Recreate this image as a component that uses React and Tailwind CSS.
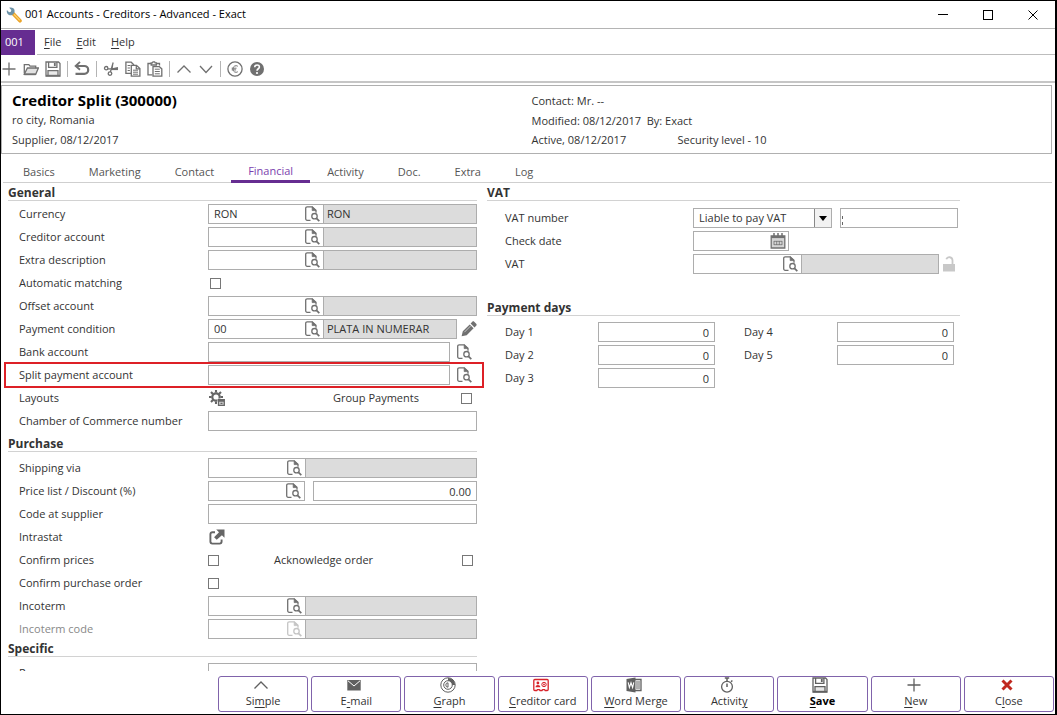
import { useState } from "react";
import clsx from "clsx";

const ICON = "h-4 w-4 shrink-0";

function Svg({ children, className = ICON }) {
  return (
    <svg
      viewBox="0 0 16 16"
      className={className}
      fill="none"
      stroke="currentColor"
      strokeWidth="1.3"
      aria-hidden="true"
    >
      {children}
    </svg>
  );
}

const WrenchIcon = () => (
  <svg viewBox="0 0 16 16" className={ICON} fill="none" aria-hidden="true">
    <path d="M7 6.500l7 7.300" stroke="#eba42a" strokeWidth="3.600" strokeLinecap="round" />
    <path d="M8 7.300l5.800 6" stroke="#ffd676" strokeWidth="1.200" />
    <path
      d="M3.200 .7l2.100 2.200-.4 1.800-1.800.5L.9 3C.2 5.300 1.500 7.600 3.600 8.200c1.100.3 2.100.1 2.700-.3l2-2.100C8.900 4 8.600 2.300 7.300 1.300 6.200.4 4.500.2 3.200.7z"
      fill="#6d93a8"
    />
  </svg>
);

const PlusIcon = () => (
  <Svg>
    <path d="M8 1.500v13M1.500 8h13" />
  </Svg>
);

const OpenIcon = () => (
  <Svg>
    <path d="M1.300 12.500V3.600h4.500l1.300 1.600h5.600v2" />
    <path d="M1.300 13.300L4.400 7h11l-2.700 6.300z" fill="currentColor" fillOpacity=".2" />
    <path d="M1.300 13.300h11.400" strokeWidth="1.800" />
  </Svg>
);

const SaveIcon = () => (
  <Svg>
    <path d="M1 1h12.500L15 2.500V15H1z" />
    <path d="M3.600 1v5.300h8.300V1" />
    <path d="M9.800 2v3" strokeWidth="1.800" />
    <path d="M3 15V9.600h10V15" fill="currentColor" fillOpacity=".15" />
    <path d="M1 14.600h14" strokeWidth="1.600" />
  </Svg>
);

const UndoIcon = () => (
  <Svg>
    <path d="M2 5h8.300a3.900 3.900 0 0 1 0 7.800H1.500" strokeWidth="2.200" />
    <path d="M6 .8L1.600 5 6 8.800" strokeWidth="1.800" />
  </Svg>
);

const CutIcon = () => (
  <Svg>
    <circle cx="3.200" cy="7.200" r="1.700" />
    <circle cx="7" cy="12.600" r="1.800" />
    <path d="M4.800 7.900l10 .2M15 6.600L8.200 8.200M7.400 10.900L10.200 1.500M9.800 2.500l-.8 5.500" />
    <path d="M8 8.100h7" strokeWidth="2" />
  </Svg>
);

const CopyIcon = () => (
  <Svg>
    <path d="M6 12.300H.9V1.200h5.300L9 4" />
    <path d="M6.300 4.400h5.200l3.400 3.200v7.500H6.300z" />
    <path d="M11.300 4.400v3.400h3.600" />
    <path d="M2.600 4.500h2.800M2.600 7h2.300M2.600 9.500h2.300M8 9.200h5M8 11.200h5M8 13.200h5" strokeWidth="1" />
  </Svg>
);

const PasteIcon = () => (
  <Svg>
    <path d="M5.300 13.800H1V2.500h3M9.500 2.500h3v2" />
    <path d="M4.200 4V1.800h1.300L6 .8h1.600l.5 1h1.300V4z" />
    <path d="M6 5.600h6.300l2.500 2.300v7.300H6z" />
    <path d="M7.800 8.200h5M7.800 10.500h5M7.800 12.800h5" strokeWidth="1" />
  </Svg>
);

const UpIcon = () => (
  <Svg>
    <path d="M1.500 11.500L8 5l6.500 6.500" />
  </Svg>
);

const DownIcon = () => (
  <Svg>
    <path d="M2 5l6 6.500L14 5" />
  </Svg>
);

const EuroIcon = () => (
  <Svg>
    <circle cx="8" cy="8" r="7.100" />
    <path d="M10.800 5.200A3.200 3.200 0 0 0 5.900 8a3.200 3.200 0 0 0 4.900 2.800M4.700 7.200h4.800M4.700 8.900h4.400" strokeWidth="1" />
  </Svg>
);

const HelpIcon = () => (
  <Svg>
    <circle cx="8" cy="8" r="7" fill="currentColor" stroke="none" />
    <path d="M5.700 6.200c0-3 4.700-3 4.700-.1C10.400 7.800 8 7.700 8 9.700" stroke="white" strokeWidth="1.600" />
    <circle cx="8" cy="12" r="1.100" fill="white" stroke="none" />
  </Svg>
);

const LookupIcon = () => (
  <Svg>
    <path d="M6.500 14.300H3.200c-.9 0-1.500-.6-1.500-1.500V2.300c0-.9.600-1.500 1.500-1.500h5L12 4.400v2.300" />
    <path d="M8.200.8l3.800 3.800H8.200z" fill="currentColor" strokeWidth=".8" />
    <circle cx="10.500" cy="10.200" r="2.700" />
    <path d="M12.500 12.300l2.800 2.900" strokeWidth="1.700" />
  </Svg>
);

const PencilIcon = () => (
  <Svg>
    <path
      d="M.6 15.300l1.200-5L8.700 3.400l3.900 3.900-6.900 6.900zM9.600 2.500l1.700-1.700c.6-.6 1.300-.6 1.900 0l2 2c.6.6.6 1.300 0 1.900l-1.700 1.700z"
      fill="currentColor"
      stroke="none"
    />
    <path d="M3.400 11.200l6.300-6.300" stroke="white" strokeWidth=".6" />
  </Svg>
);

const GearIcon = () => (
  <Svg>
    <circle cx="7" cy="7" r="3.700" strokeWidth="2.200" />
    <path
      d="M7 0v2.600M7 11.500V14M0 7h2.600M11.500 7H14M2 2l1.900 1.900M10 4l2-2M2 12l1.900-1.900"
      strokeWidth="2.100"
    />
    <path d="M8.500 8.500h7v7h-7z" fill="white" stroke="none" />
    <path d="M9.500 9.600h5.800v5.800H9.500zM9.500 11h5.800M11.500 13.300h2" fill="currentColor" fillOpacity=".3" />
  </Svg>
);

const PopOutIcon = () => (
  <Svg>
    <path d="M6 3.300H3.400c-1.200 0-2 .7-2 1.900v7.400c0 1.200.8 2 2 2h7.200c1.200 0 2-.8 2-2v-2" strokeWidth="1.900" />
    <path d="M7.200.6h8.300v8.200l-2.600-2.600-5.200 4.600-2.600-2.600 4.900-4.900z" fill="currentColor" stroke="none" />
  </Svg>
);

const CalendarIcon = () => (
  <Svg>
    <path d="M1.200 3h13.600v12H1.200z" fill="#d4d4d4" />
    <path d="M1.200 4h13.600" strokeWidth="2.200" />
    <path d="M4 0v3M8 0v3M12 0v3" strokeWidth="1.500" />
    <path d="M4 8.300h8M4 11.700h8M4 8v4M6.700 8v4M9.300 8v4M12 8v4" strokeWidth=".8" />
  </Svg>
);

const UnlockIcon = () => (
  <Svg>
    <path d="M2 8h12v7.500H2z" fill="currentColor" stroke="none" />
    <path d="M11.500 8V4.300a3.200 3.200 0 0 0-6.200-1" strokeWidth="1.800" />
  </Svg>
);

const MailIcon = () => (
  <Svg>
    <path d="M1.300 3h13.400v10.500H1.300z" fill="currentColor" stroke="none" />
    <path d="M2 3.800L8 9l6-5.200" stroke="white" strokeWidth="1" />
  </Svg>
);

const GraphIcon = () => (
  <Svg>
    <circle cx="8" cy="8" r="7.200" strokeWidth="1" />
    <circle cx="8" cy="8" r="4.300" strokeWidth="1" />
    <path d="M8 5.800v4.400a2.200 2.200 0 1 1 0-4.400" strokeWidth="1" />
    <path d="M8 .9A7.100 7.100 0 0 1 15.100 8h-2.800A4.300 4.300 0 0 0 8 3.700z" fill="currentColor" stroke="none" />
  </Svg>
);

const CardIcon = () => (
  <Svg>
    <path d="M.8 3.500c0-.6.400-1 1-1h12.400c.6 0 1 .4 1 1v9c0 .6-.4 1-1 1h-2l-.7-.9h-1.800l-.7.9H7l-.7-.9H4.500l-.7.900h-2c-.6 0-1-.4-1-1z" />
    <circle cx="4.900" cy="6" r="1.400" fill="currentColor" stroke="none" />
    <path d="M2.500 10.300c0-3 4.800-3 4.800 0z" fill="currentColor" stroke="none" />
    <circle cx="11" cy="7.500" r="2.200" strokeWidth="1" />
    <circle cx="11" cy="7.500" r=".9" fill="currentColor" stroke="none" />
  </Svg>
);

const WordIcon = () => (
  <Svg>
    <path d="M9 2.500h6v11H9" />
    <path d="M10 5h4M10 7h4M10 9h4M10 11h4" strokeWidth="1" />
    <path d="M.5 2L9.500.5v15L.5 14z" fill="currentColor" stroke="none" />
    <path d="M2.200 5.300l1.200 5.200L5 5.800l1.600 4.700 1.200-5.200" stroke="white" strokeWidth="1.100" />
  </Svg>
);

const StopwatchIcon = () => (
  <Svg>
    <circle cx="8" cy="9.700" r="5.400" />
    <path d="M5.800.9h4.400M8 1v3M8 6.500v3.500M12 4.800l1.400-1.300" strokeWidth="1.500" />
  </Svg>
);

const CrossIcon = () => (
  <Svg>
    <path d="M3.500 3.500l9 9M12.500 3.500l-9 9" strokeWidth="3" />
  </Svg>
);

const MENUS = ["File", "Edit", "Help"];

const TOOLBAR = [
  [
    ["New", PlusIcon],
    ["Open", OpenIcon],
    ["Save", SaveIcon],
  ],
  [["Undo", UndoIcon]],
  [
    ["Cut", CutIcon],
    ["Copy", CopyIcon],
    ["Paste", PasteIcon],
  ],
  [
    ["Previous", UpIcon],
    ["Next", DownIcon],
  ],
  [
    ["Currency", EuroIcon],
    ["Help", HelpIcon],
  ],
];

const TABS = ["Basics", "Marketing", "Contact", "Financial", "Activity", "Doc.", "Extra", "Log"];

const ACTIONS = [
  { label: "Simple", key: 2, icon: UpIcon },
  { label: "E-mail", key: 1, icon: MailIcon },
  { label: "Graph", key: 0, icon: GraphIcon },
  { label: "Creditor card", key: 0, icon: CardIcon, color: "text-[#d8232a]" },
  { label: "Word Merge", key: 0, icon: WordIcon },
  { label: "Activity", key: 7, icon: StopwatchIcon },
  { label: "Save", key: 0, icon: SaveIcon, bold: true },
  { label: "New", key: 0, icon: PlusIcon },
  { label: "Close", key: 1, icon: CrossIcon, color: "text-[#c0281f]" },
];

function AccessLabel({ text, at = 0 }) {
  return (
    <span>
      {text.slice(0, at)}
      <u className="underline-offset-2">{text[at]}</u>
      {text.slice(at + 1)}
    </span>
  );
}

function Section({ title, children, className }) {
  return (
    <section className={className}>
      <h2 className="h-[18px] border-b border-[#d2d2d2] text-[12px] leading-5 font-bold text-[#333]">
        {title}
      </h2>
      {children}
    </section>
  );
}

function Row({ id, label, wide, muted, highlight, children }) {
  return (
    <div className={clsx("relative flex h-5 items-center", wide ? "pl-[18px]" : "pl-[11px]")}>
      <label
        htmlFor={id}
        className={clsx("shrink-0", wide ? "w-[188px]" : "w-[189px]", muted && "text-[#888]")}
      >
        {label}
      </label>
      <div className="flex min-w-0 flex-1 items-center">{children}</div>
      {highlight ? (
        <span className="pointer-events-none absolute -top-[3px] -right-[7px] -bottom-[3px] -left-1 border-2 border-[#dd2026]" />
      ) : null}
    </div>
  );
}

function Field({ className, ...props }) {
  return (
    <input
      type="text"
      className={clsx(
        "h-5 min-w-0 border border-[#adadad] bg-white px-[5px] outline-none",
        className,
      )}
      {...props}
    />
  );
}

function Check({ id, className }) {
  return (
    <input
      id={id}
      type="checkbox"
      className={clsx(
        "h-[11px] w-[11px] shrink-0 appearance-none border border-[#777] bg-white checked:bg-[#662d91]",
        className,
      )}
    />
  );
}

function IconButton({ label, icon: Icon, className }) {
  return (
    <button type="button" aria-label={label} className={clsx("shrink-0 text-[#707070]", className)}>
      <Icon />
    </button>
  );
}

// Code box with a search button, optionally followed by the read-only description
function Lookup({ id, label, value, text, size = "w-[116px]", plain, muted }) {
  return (
    <>
      <div className={clsx("flex h-5 shrink-0 items-center border border-[#adadad] bg-white pr-[3px]", size)}>
        <input
          id={id}
          type="text"
          defaultValue={value}
          className="w-0 min-w-0 flex-1 pl-[5px] outline-none"
        />
        <IconButton
          label={`Search ${label}`}
          icon={LookupIcon}
          className={muted ? "opacity-40" : undefined}
        />
      </div>
      {plain ? null : (
        <input
          type="text"
          readOnly
          defaultValue={text}
          aria-label={`${label} description`}
          className="-ml-px h-5 w-0 min-w-0 flex-1 border border-[#adadad] bg-[#dcdcdc] px-[3px] pb-[2px] outline-none"
        />
      )}
    </>
  );
}

function DayField({ day }) {
  const id = `day-${day}`;
  return (
    <div className="flex h-5 items-center">
      <label htmlFor={id} className="w-[93px] shrink-0">
        Day {day}
      </label>
      <Field id={id} defaultValue="0" className="w-0 flex-1 text-right" />
    </div>
  );
}

function TitleBar() {
  return (
    <header className="flex h-[28px] shrink-0 items-center border-b border-[#b4b4b4]">
      <div className="flex flex-1 items-center gap-[3px] pl-[5px] text-[11px] text-black">
        <WrenchIcon />
        <span>001 Accounts - Creditors - Advanced - Exact</span>
      </div>
      <button type="button" aria-label="Minimize" className="flex w-[45px] justify-center">
        <span className="h-px w-[10px] bg-black" />
      </button>
      <button type="button" aria-label="Maximize" className="flex w-[45px] justify-center">
        <span className="h-[10px] w-[10px] border border-black" />
      </button>
      <button type="button" aria-label="Close window" className="flex w-[45px] justify-center">
        <svg viewBox="0 0 10 10" className="h-[10px] w-[10px]" stroke="black" aria-hidden="true">
          <path d="M.5.5l9 9M9.500.5l-9 9" />
        </svg>
      </button>
    </header>
  );
}

function MenuBar() {
  return (
    <nav className="flex h-[26px] shrink-0 items-stretch">
      <span className="mt-px flex w-[34px] items-center bg-[#662d91] pl-1 text-white">001</span>
      <div className="ml-[2px] flex flex-1 items-center gap-[15px] border-b border-[#bdbdbd] pt-[2px] pl-[7px]">
        {MENUS.map((menu) => (
          <button key={menu} type="button">
            <AccessLabel text={menu} />
          </button>
        ))}
      </div>
    </nav>
  );
}

function Toolbar() {
  return (
    <div className="flex h-[28px] shrink-0 items-center border-b-2 border-[#c6c6c6] pt-[2px]">
      <div className="-ml-[3px] flex items-center">
        {TOOLBAR.map((group, i) => (
          <div key={i} className="flex items-center">
            {i > 0 ? <span className="mx-[3px] h-4 w-px bg-[#b4b4b4]" /> : null}
            {group.map(([label, Icon]) => (
              <IconButton
                key={label}
                label={label}
                icon={Icon}
                className="flex w-[22px] justify-center"
              />
            ))}
          </div>
        ))}
      </div>
    </div>
  );
}

function Summary() {
  return (
    <div className="mt-[2px] mr-[3px] grid h-[69px] shrink-0 grid-cols-2 border border-[#b0b0b0] pl-[10px]">
      <div>
        <h1 className="pt-[4px] text-[15px] leading-5 font-bold text-black">
          Creditor Split (300000)
        </h1>
        <p className="leading-5">ro city, Romania</p>
        <p className="leading-5">Supplier, 08/12/2017</p>
      </div>
      <div className="pt-[5px]">
        <p className="leading-5">Contact: Mr. --</p>
        <p className="leading-[19px]">Modified: 08/12/2017&nbsp; By: Exact</p>
        <p className="flex leading-5">
          <span className="w-[146px]">Active, 08/12/2017</span>
          <span>Security level - 10</span>
        </p>
      </div>
    </div>
  );
}

function Tabs() {
  const [active, setActive] = useState("Financial");
  return (
    <div role="tablist" className="mr-[3px] ml-[2px] flex h-[29px] shrink-0 border-b border-[#cfcfcf] pl-[3px]">
      {TABS.map((tab) => (
        <button
          key={tab}
          type="button"
          role="tab"
          aria-selected={tab === active}
          onClick={() => setActive(tab)}
          className={clsx(
            "-mb-px border-b-[3px] px-[17px]",
            tab === active
              ? "border-[#662d91] pt-[9px] text-[#7b3fae]"
              : "border-transparent pt-[10px] text-[#555]",
          )}
        >
          {tab}
        </button>
      ))}
    </div>
  );
}

function LeftColumn() {
  return (
    <div>
      <Section title="General">
        <div className="flex flex-col gap-[3px] py-[3px]">
          <Row id="currency" label="Currency">
            <Lookup id="currency" label="Currency" value="RON" text="RON" />
          </Row>
          <Row id="creditor" label="Creditor account">
            <Lookup id="creditor" label="Creditor account" />
          </Row>
          <Row id="extra" label="Extra description">
            <Lookup id="extra" label="Extra description" />
          </Row>
          <Row id="matching" label="Automatic matching">
            <Check id="matching" className="ml-[2px]" />
          </Row>
          <Row id="offset" label="Offset account">
            <Lookup id="offset" label="Offset account" />
          </Row>
          <Row id="condition" label="Payment condition">
            <Lookup id="condition" label="Payment condition" value="00" text="PLATA IN NUMERAR" />
            <IconButton label="Edit payment condition" icon={PencilIcon} className="ml-1" />
          </Row>
          <Row id="bank" label="Bank account">
            <Field id="bank" className="w-0 flex-1" />
            <IconButton label="Search bank account" icon={LookupIcon} className="mr-[5px] ml-[6px]" />
          </Row>
          <Row id="split" label="Split payment account" highlight>
            <Field id="split" className="w-0 flex-1" />
            <IconButton label="Search split payment account" icon={LookupIcon} className="mr-[5px] ml-[6px]" />
          </Row>
          <Row id="layouts" label="Layouts">
            <button id="layouts" type="button" aria-label="Layouts" className="ml-px w-[124px] text-[#666]">
              <GearIcon />
            </button>
            <label htmlFor="group">Group Payments</label>
            <Check id="group" className="mr-[5px] ml-auto" />
          </Row>
          <Row id="chamber" label="Chamber of Commerce number">
            <Field id="chamber" className="w-0 flex-1" />
          </Row>
        </div>
      </Section>

      <Section title="Purchase">
        <div className="flex flex-col gap-[3px] pt-[6px]">
          <Row id="shipping" label="Shipping via">
            <Lookup id="shipping" label="Shipping via" size="w-[98px]" />
          </Row>
          <Row id="price" label="Price list / Discount (%)">
            <Lookup id="price" label="Price list" size="w-[97px]" plain />
            <Field aria-label="Discount (%)" defaultValue="0.00" className="ml-2 w-0 flex-1 text-right" />
          </Row>
          <Row id="code" label="Code at supplier">
            <Field id="code" className="w-0 flex-1" />
          </Row>
          <Row id="intrastat" label="Intrastat">
            <button id="intrastat" type="button" aria-label="Intrastat" className="ml-px text-[#666]">
              <PopOutIcon />
            </button>
          </Row>
          <Row id="prices" label="Confirm prices">
            <Check id="prices" />
            <label htmlFor="acknowledge" className="ml-[55px]">
              Acknowledge order
            </label>
            <Check id="acknowledge" className="mr-1 ml-auto" />
          </Row>
          <Row id="order" label="Confirm purchase order">
            <Check id="order" />
          </Row>
          <Row id="incoterm" label="Incoterm">
            <Lookup id="incoterm" label="Incoterm" size="w-[98px]" />
          </Row>
          <Row id="incoterm-code" label="Incoterm code" muted>
            <Lookup id="incoterm-code" label="Incoterm code" size="w-[98px]" muted />
          </Row>
        </div>
      </Section>

      <Section title="Specific">
        <div className="pt-[6px]">
          <Row id="resource" label="Resource">
            <Field id="resource" className="w-0 flex-1" />
          </Row>
        </div>
      </Section>
    </div>
  );
}

function RightColumn() {
  return (
    <div>
      <Section title="VAT">
        <div className="flex flex-col gap-[3px] pt-[7px]">
          <Row id="vat-number" label="VAT number" wide>
            <div className="relative shrink-0">
              <select
                id="vat-number"
                className="h-5 w-[139px] appearance-none border border-[#adadad] bg-white px-[5px] outline-none"
              >
                <option>Liable to pay VAT</option>
                <option>Not liable to pay VAT</option>
              </select>
              <span className="pointer-events-none absolute inset-y-px right-px flex w-[17px] items-center justify-center border-l border-[#888] bg-[#f2f2f2]">
                <svg viewBox="0 0 8 5" className="h-[5px] w-2" aria-hidden="true">
                  <path d="M0 0h8L4 5z" fill="black" />
                </svg>
              </span>
            </div>
            <div className="relative mr-[2px] ml-2 flex flex-1">
              <Field aria-label="VAT registration" className="w-0 flex-1" />
              <span className="pointer-events-none absolute top-2 bottom-[3px] left-[2px] border-l border-dashed border-[#666]" />
            </div>
          </Row>
          <Row id="check-date" label="Check date" wide>
            <div className="flex h-5 w-[96px] items-center border border-[#adadad] bg-white pr-[2px]">
              <input id="check-date" type="text" className="w-0 min-w-0 flex-1 pl-[5px] outline-none" />
              <IconButton label="Pick check date" icon={CalendarIcon} />
            </div>
          </Row>
          <Row id="vat" label="VAT" wide>
            <Lookup id="vat" label="VAT" size="w-[109px]" />
            <button type="button" aria-label="Unlock VAT" className="mr-[3px] ml-[2px] shrink-0 text-[#c8c8c8]">
              <UnlockIcon />
            </button>
          </Row>
        </div>
      </Section>

      <Section title="Payment days" className="mt-6">
        <div className="grid grid-cols-2 gap-x-[29px] pt-[6px] pr-[6px] pl-[18px]">
          <div className="flex flex-col gap-[3px]">
            {[1, 2, 3].map((day) => (
              <DayField key={day} day={day} />
            ))}
          </div>
          <div className="flex flex-col gap-[3px]">
            {[4, 5].map((day) => (
              <DayField key={day} day={day} />
            ))}
          </div>
        </div>
      </Section>
    </div>
  );
}

function ActionBar() {
  return (
    <footer className="flex h-[43px] shrink-0 justify-end pt-[5px] pr-px pb-[2px]">
      <div className="grid w-4/5 max-w-[836px] grid-cols-9 gap-[3px]">
        {ACTIONS.map(({ label, key, icon: Icon, color, bold }) => (
          <button
            key={label}
            type="button"
            className={clsx(
              "flex flex-col items-center rounded-[3px] border border-[#8063ab] bg-white leading-4",
              bold && "font-bold text-black",
            )}
          >
            <span className={clsx("pr-1", color || "text-[#606060]")}>
              <Icon />
            </span>
            <AccessLabel text={label} at={key} />
          </button>
        ))}
      </div>
    </footer>
  );
}

export default function App() {
  return (
    <div className="flex h-screen flex-col overflow-hidden border border-r-2 border-black bg-white font-['Open_Sans','Noto_Sans',sans-serif] text-[11px] text-[#333]">
      <TitleBar />
      <MenuBar />
      <Toolbar />
      <Summary />
      <Tabs />
      <main className="grid min-h-0 flex-1 grid-cols-[469fr_473fr_85fr] gap-x-[10px] overflow-hidden pl-[7px]">
        <LeftColumn />
        <RightColumn />
      </main>
      <ActionBar />
    </div>
  );
}
